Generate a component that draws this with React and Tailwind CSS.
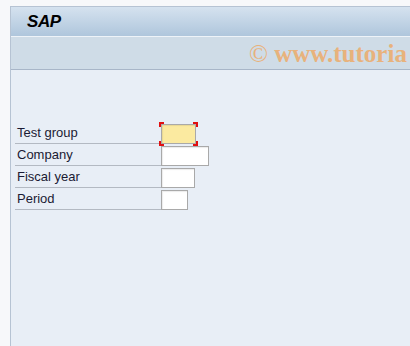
import React from "react";

const fields = [
  { label: "Test group", width: "w-[35px]", active: true },
  { label: "Company", width: "w-[48px]" },
  { label: "Fiscal year", width: "w-[34px]" },
  { label: "Period", width: "w-[27px]" }
];

export default function App() {
  return (
    <div className="w-[410px] h-[346px] bg-[#f7f8fa] flex flex-col overflow-hidden font-['Liberation_Sans',Arial,sans-serif]">
      <div className="h-[6px] shrink-0" />
      <div className="flex-1 flex">
        <div className="w-[10px] shrink-0" />
        <div className="flex-1 flex flex-col border-l border-t border-[#b6c3d3] bg-[#e8eef6]">
          {/* TITLE */}
          <div className="h-[30px] bg-gradient-to-b from-[#d5e2ef] to-[#afc6dc] flex items-center pl-[16px] border-b border-[#eef3f8]">
            <span className="text-[17px] font-bold italic text-black tracking-tight">SAP</span>
          </div>

          {/* TOOLBAR */}
          <div className="h-[33px] bg-[#cfdce7] border-b border-[#a8b6c8] flex items-center pl-[238px] overflow-hidden">
            <span className="whitespace-nowrap text-[25px] leading-none text-[#e8b27c] font-['Liberation_Serif',serif]">
              <span className="font-normal">©</span> <span className="font-bold">www.tutoria</span>
            </span>
          </div>

          {/* FORM */}
          <div className="pt-[54px] pl-[4px] flex flex-col gap-[2px]">
            {fields.map(f => (
              <div key={f.label} className="flex items-end h-[20px]">
                <div className="w-[146px] h-[20px] border-b border-[#b3b9c2] text-[13px] text-[#1a1a33] pl-[2px] leading-[18px]">
                  {f.label}
                </div>
                <div className="relative">
                  <div
                    className={`${f.width} h-[20px] border border-[#a9a9a9] shadow-[inset_1px_1px_1px_rgba(0,0,0,0.08)] ${
                      f.active ? "bg-[#fbeaa0]" : "bg-white"
                    }`}
                  />
                  {f.active && (
                    <>
                      <span className="absolute -left-[2px] -top-[2px] w-[5px] h-[5px] border-l-2 border-t-2 border-[#e01010]" />
                      <span className="absolute -right-[2px] -top-[2px] w-[5px] h-[5px] border-r-2 border-t-2 border-[#e01010]" />
                      <span className="absolute -left-[2px] -bottom-[2px] w-[5px] h-[5px] border-l-2 border-b-2 border-[#e01010]" />
                      <span className="absolute -right-[2px] -bottom-[2px] w-[5px] h-[5px] border-r-2 border-b-2 border-[#e01010]" />
                    </>
                  )}
                </div>
              </div>
            ))}
          </div>
        </div>
      </div>
    </div>
  );
}
